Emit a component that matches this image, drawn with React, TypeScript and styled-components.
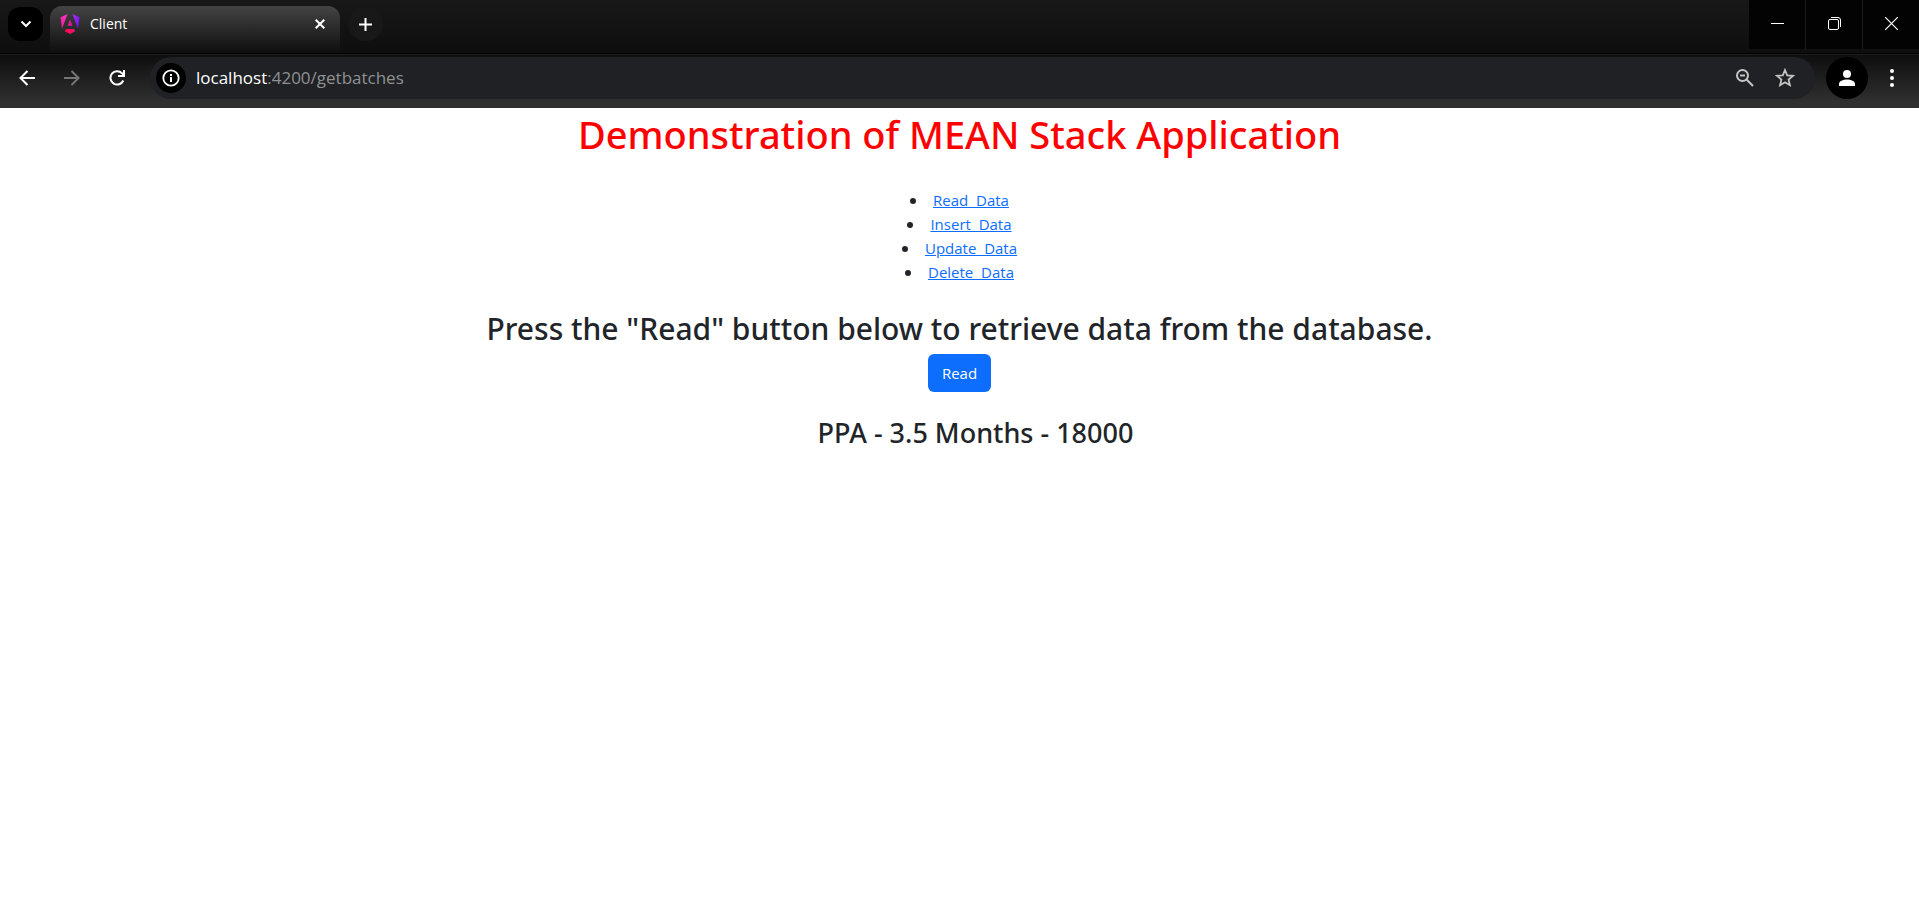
import React from "react";
import styled, { createGlobalStyle } from "styled-components";

const GlobalStyle = createGlobalStyle`
  * { box-sizing: border-box; }
  body { margin: 0; background: #fff; color: #212529; font: 16px/24px "Segoe UI", "Open Sans", "Noto Sans", sans-serif; }
  h1, h2, h3 { font-family: "Segoe UI", "Noto Sans", "Open Sans", sans-serif; font-weight: 500; }
  button { font: inherit; border: 0; padding: 0; cursor: pointer; }
`;

const TabStrip = styled.header`
  height: 54px;
  display: flex;
  align-items: flex-start;
  background: linear-gradient(#181818, #0e0e0e);
  border-bottom: 1px solid #000;
`;
const TabSearch = styled.button`
  width: 35px;
  height: 34px;
  margin: 7px 7px 0 8px;
  border-radius: 12px;
  background: #000;
  display: grid;
  place-items: center;
`;
const Tab = styled.div`
  width: 290px;
  height: 47px;
  margin-top: 6px;
  padding: 0 12px 11px 10px;
  display: flex;
  align-items: center;
  gap: 10px;
  border-radius: 12px 12px 0 0;
  background: linear-gradient(#444, #0e0e0e);
  color: #fff;
  font-size: 14px;
`;
const TabTitle = styled.span`
  flex: 1;
`;
const PlainButton = styled.button`
  width: 16px;
  height: 16px;
  background: none;
  display: grid;
  place-items: center;
`;
const NewTab = styled.button`
  width: 35px;
  height: 34px;
  margin: 7px 0 0 8px;
  border-radius: 17px;
  background: #181818;
  display: grid;
  place-items: center;
`;
const WindowControls = styled.div`
  margin-left: auto;
  display: flex;
  gap: 1px;
  background: #1a1a1a;
`;
const WindowButton = styled.button`
  width: 56px;
  height: 49px;
  padding-bottom: 2px;
  background: #030303;
  display: grid;
  place-items: center;
`;

const Toolbar = styled.nav`
  height: 54px;
  padding: 2px 15px 9px 11px;
  display: flex;
  align-items: center;
  background: linear-gradient(#0e0e0e, #303030 90%);
  border-top: 1px solid #1d1d1d;
`;
const ToolButton = styled.button`
  width: 32px;
  height: 32px;
  margin-right: 13px;
  background: none;
  display: grid;
  place-items: center;
`;
const AddressBar = styled.div`
  flex: 1;
  height: 42px;
  margin: 0 11px 0 4px;
  padding: 0 20px 0 6px;
  display: flex;
  align-items: center;
  border-radius: 21px;
  background: #202124;
`;
const SiteInfo = styled.button`
  width: 30px;
  height: 30px;
  margin-right: 10px;
  border-radius: 50%;
  background: #000;
  display: grid;
  place-items: center;
`;
const Address = styled.span`
  flex: 1;
  font-size: 17px;
  color: #8f9193;
`;
const Host = styled.span`
  color: #fff;
`;
const BarButton = styled(PlainButton)`
  width: 20px;
  height: 20px;
  margin-left: 20px;
`;
const Profile = styled.button`
  width: 42px;
  height: 42px;
  border-radius: 50%;
  background: #000;
  display: grid;
  place-items: center;
`;
const MenuButton = styled(PlainButton)`
  width: 24px;
  height: 32px;
  margin-left: 12px;
`;

const Page = styled.main`
  text-align: center;
`;
const Title = styled.h1`
  margin: 0;
  font-size: 38px;
  line-height: 52px;
  color: #f00;
`;
const Links = styled.ul`
  margin: 28px 0 26px;
  padding: 0;
  list-style-position: inside;
`;
const PageLink = styled.a`
  color: #0d6efd;
  font-size: 15px;
  white-space: pre;
`;
const Prompt = styled.h2`
  margin: 0 0 6px;
  font-size: 30px;
  line-height: 38px;
`;
const ReadButton = styled.button`
  padding: 7px 14px;
  border-radius: 6px;
  background: #0d6efd;
  color: #fff;
  font-size: 15px;
  line-height: 24px;
`;
const Results = styled.ul`
  margin: 24px 0;
  padding: 0 0 0 32px;
  list-style: none;
`;
const Result = styled.h3`
  margin: 0;
  font-size: 27px;
  line-height: 34px;
`;

const AngularLogo = () => (
  <svg width="20" height="20" viewBox="0 0 20 20">
    <defs>
      <linearGradient id="ngLeft" x1="0" y1="1" x2="1" y2="0">
        <stop offset="0" stopColor="#f31a86" />
        <stop offset="1" stopColor="#f437dc" />
      </linearGradient>
      <linearGradient id="ngRight" x1="0" y1="0" x2="1" y2="1">
        <stop offset="0" stopColor="#b62cf0" />
        <stop offset="1" stopColor="#5a12f5" />
      </linearGradient>
      <linearGradient id="ngBase" x1="0" y1="0" x2="1" y2="0">
        <stop offset="0" stopColor="#ff0a4c" />
        <stop offset="1" stopColor="#f01070" />
      </linearGradient>
    </defs>
    <path fill="url(#ngLeft)" d="M0.500 3.300 7.600 0 2 14.800Z" />
    <path fill="url(#ngRight)" d="M12.400 0 19.500 3.300 18 14.800Z" />
    <path fill="#e316a0" d="M10 5.600 12.500 11.800h-5Z" />
    <path fill="url(#ngBase)" d="M6 15h8l1.200 2.300L10 20l-5.200-2.700Z" />
  </svg>
);

const links = ["Read  Data", "Insert  Data", "Update  Data", "Delete  Data"];

export default function App() {
  return (
    <>
      <GlobalStyle />
      <TabStrip>
        <TabSearch aria-label="Search tabs">
          <svg width="12" height="8" fill="none" stroke="#fff" strokeWidth="2"><path d="m1.500 1.500 4.500 4.500 4.500-4.500" /></svg>
        </TabSearch>
        <Tab>
          <AngularLogo />
          <TabTitle>Client</TabTitle>
          <PlainButton aria-label="Close tab">
            <svg width="10" height="10" stroke="#fff" strokeWidth="2"><path d="m.7.700 8.600 8.600m0-8.600L.7 9.300" /></svg>
          </PlainButton>
        </Tab>
        <NewTab aria-label="New tab">
          <svg width="13" height="13" stroke="#fff" strokeWidth="2"><path d="M6.500 0v13M0 6.500h13" /></svg>
        </NewTab>
        <WindowControls>
          <WindowButton aria-label="Minimize">
            <svg width="13" height="13"><path fill="#fff" d="M0 6h13v1H0z" /></svg>
          </WindowButton>
          <WindowButton aria-label="Restore">
            <svg width="13" height="13" fill="none" stroke="#fff">
              <rect x=".5" y="2.500" width="10" height="10" rx="1.500" />
              <path d="M3 .5h7a2.500 2.500 0 0 1 2.500 2.500v7" />
            </svg>
          </WindowButton>
          <WindowButton aria-label="Close">
            <svg width="13" height="13" stroke="#fff" strokeWidth="1.200"><path d="m0 0 13 13M13 0 0 13" /></svg>
          </WindowButton>
        </WindowControls>
      </TabStrip>
      <Toolbar>
        <ToolButton aria-label="Back">
          <svg width="16" height="16" fill="none" stroke="#fff" strokeWidth="2"><path d="M16 8H2M8.500 1 1.500 8l7 7" /></svg>
        </ToolButton>
        <ToolButton aria-label="Forward">
          <svg width="16" height="16" fill="none" stroke="#757575" strokeWidth="2"><path d="M0 8h14M7.500 1l7 7-7 7" /></svg>
        </ToolButton>
        <ToolButton aria-label="Reload">
          <svg width="16" height="16" fill="none" stroke="#fff" strokeWidth="2"><path d="M14.300 10.500A6.700 6.700 0 1 1 13 3.200L15 5.500M15 0v6H9" /></svg>
        </ToolButton>
        <AddressBar>
          <SiteInfo aria-label="Site information">
            <svg width="18" height="18" fill="none" stroke="#fff" strokeWidth="2"><circle cx="9" cy="9" r="7.700" strokeWidth="1.800" /><path d="M9 8v5M9 5v2" /></svg>
          </SiteInfo>
          <Address><Host>localhost</Host>:4200/getbatches</Address>
          <BarButton aria-label="Zoom">
            <svg width="18" height="18" fill="none" stroke="#c4c4c4" strokeWidth="2"><circle cx="6.500" cy="6.500" r="5.500" /><path d="m10.500 10.500 6.500 6.500M4 6.500h5" /></svg>
          </BarButton>
          <BarButton aria-label="Bookmark">
            <svg width="20" height="20" viewBox="0 0 20 20" fill="none" stroke="#c4c4c4" strokeWidth="1.800"><path d="m10 2 2.200 5.300 5.700.5-4.300 3.800 1.300 5.600-4.900-3-4.900 3 1.300-5.600L2.100 7.800l5.700-.5Z" /></svg>
          </BarButton>
        </AddressBar>
        <Profile aria-label="Profile">
          <svg width="16" height="16" fill="#fff"><circle cx="8" cy="4" r="4" /><path d="M0 16v-2c0-3 4-4.500 8-4.500s8 1.500 8 4.500v2Z" /></svg>
        </Profile>
        <MenuButton aria-label="Menu">
          <svg width="4" height="18" fill="#fff"><circle cx="2" cy="2" r="2" /><circle cx="2" cy="9" r="2" /><circle cx="2" cy="16" r="2" /></svg>
        </MenuButton>
      </Toolbar>
      <Page>
        <Title>Demonstration of MEAN Stack Application</Title>
        <Links>
          {links.map((text) => (
            <li key={text}><PageLink href="#">{text}</PageLink></li>
          ))}
        </Links>
        <Prompt>Press the "Read" button below to retrieve data from the database.</Prompt>
        <ReadButton>Read</ReadButton>
        <Results>
          <li><Result>PPA - 3.5 Months - 18000</Result></li>
        </Results>
      </Page>
    </>
  );
}
